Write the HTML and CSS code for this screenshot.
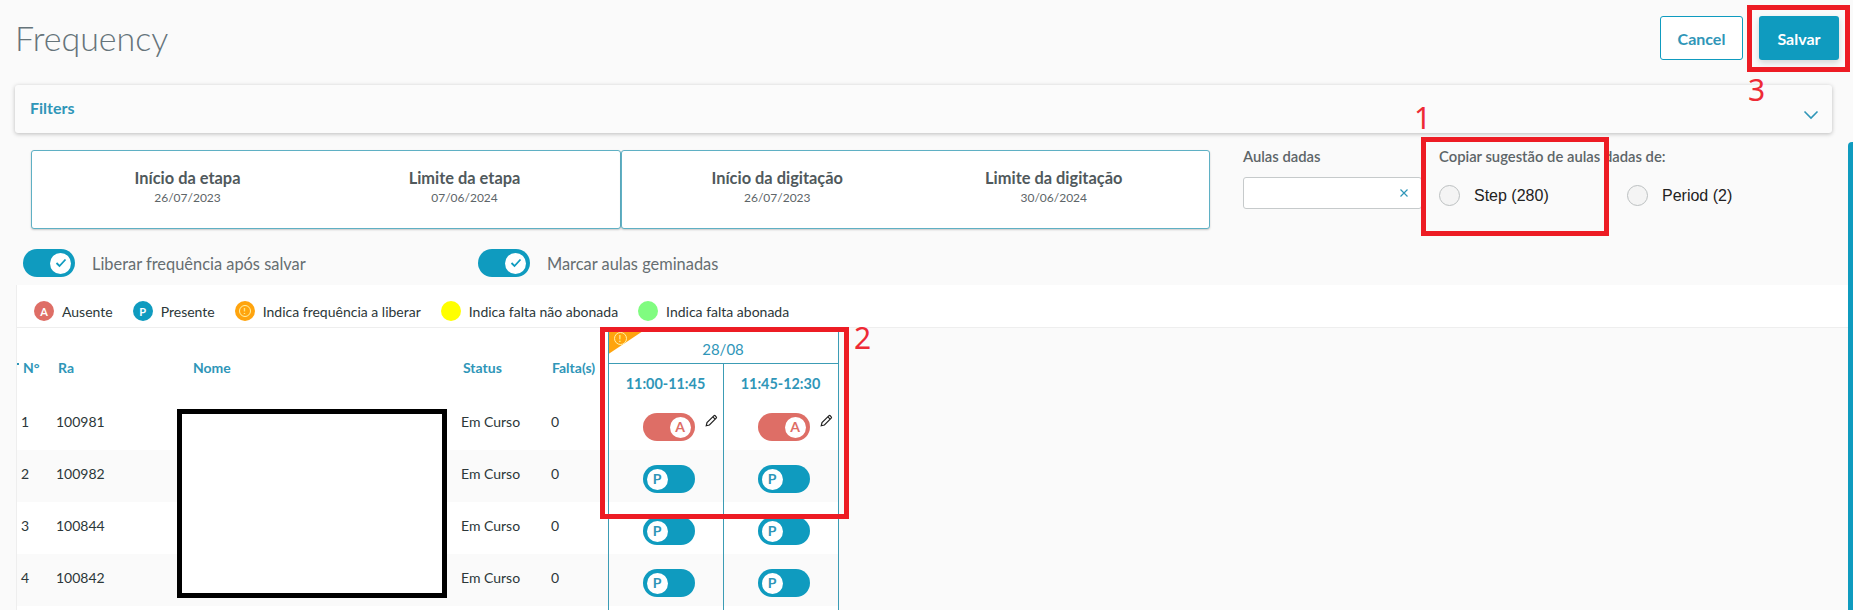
FILE: index.html
```html
<!DOCTYPE html>
<html lang="en">
<head>
    <meta charset="UTF-8">
    <title>Frequency</title>
    <link rel="stylesheet" href="styles.css">
</head>
<body>

<header class="top">
    <h1>Frequency</h1>
    <div class="actions">
        <button class="btn btn-outline">Cancel</button>
        <button class="btn btn-primary">Salvar</button>
    </div>
</header>

<section class="filters">
    <span class="filters-title">Filters</span>
    <svg class="chevron" width="16" height="10" viewBox="0 0 16 10"><path d="M1.5 1.5 8 8l6.5-6.5" fill="none" stroke="#2f96b8" stroke-width="1.6"/></svg>
</section>

<section class="period-row">
    <div class="info-card">
        <div class="info-item"><strong>Início da etapa</strong><small>26/07/2023</small></div>
        <div class="info-item"><strong>Limite da etapa</strong><small>07/06/2024</small></div>
    </div>
    <div class="info-card">
        <div class="info-item"><strong>Início da digitação</strong><small>26/07/2023</small></div>
        <div class="info-item"><strong>Limite da digitação</strong><small>30/06/2024</small></div>
    </div>
    <div class="given">
        <label>Aulas dadas</label>
        <div class="given-input">
            <svg width="10" height="10" viewBox="0 0 10 10"><path d="M1.5 1.5l7 7M8.5 1.5l-7 7" stroke="#2f96b8" stroke-width="1.2"/></svg>
        </div>
    </div>
    <div class="copy">
        <label>Copiar sugestão de aulas dadas de:</label>
        <div class="radios">
            <span class="radio radio-step"><i></i>Step (280)</span>
            <span class="radio"><i></i>Period (2)</span>
        </div>
    </div>
</section>

<section class="switches">
    <div class="switch switch-first">
        <span class="toggle toggle-on">
            <span class="knob">
                <svg width="12" height="10" viewBox="0 0 12 10"><path d="M1.5 5 4.5 8l6-6.5" fill="none" stroke="#0f9bbf" stroke-width="1.8"/></svg>
            </span>
        </span>
        Liberar frequência após salvar
    </div>
    <div class="switch">
        <span class="toggle toggle-on">
            <span class="knob">
                <svg width="12" height="10" viewBox="0 0 12 10"><path d="M1.5 5 4.5 8l6-6.5" fill="none" stroke="#0f9bbf" stroke-width="1.8"/></svg>
            </span>
        </span>
        Marcar aulas geminadas
    </div>
</section>

<section class="panel">
    <div class="legend">
        <span class="legend-item"><b class="dot dot-a">A</b>Ausente</span>
        <span class="legend-item"><b class="dot dot-p">P</b>Presente</span>
        <span class="legend-item"><b class="dot dot-w"><em>!</em></b>Indica frequência a liberar</span>
        <span class="legend-item"><b class="dot dot-y"></b>Indica falta não abonada</span>
        <span class="legend-item"><b class="dot dot-g"></b>Indica falta abonada</span>
    </div>

    <table class="grid">
        <colgroup>
            <col class="c-n"><col class="c-ra"><col class="c-nome"><col class="c-status"><col class="c-falta"><col class="c-slot"><col class="c-slot">
        </colgroup>
        <thead>
            <tr class="head-date">
                <th rowspan="2" class="th-n">N°</th>
                <th rowspan="2">Ra</th>
                <th rowspan="2">Nome</th>
                <th rowspan="2">Status</th>
                <th rowspan="2" class="th-falta">Falta(s)</th>
                <th colspan="2" class="th-date">
                    <span class="flag"><em>!</em></span>
                    28/08
                </th>
            </tr>
            <tr class="head-time">
                <th class="th-time">11:00-11:45</th>
                <th class="th-time">11:45-12:30</th>
            </tr>
        </thead>
        <tbody>
            <tr>
                <td class="td-n">1</td><td>100981</td><td></td><td>Em Curso</td><td>0</td>
                <td class="slot"><div class="slot-in"><span class="toggle toggle-a"><span class="knob">A</span></span>
                    <svg class="pencil" width="13" height="13" viewBox="0 0 13 13"><path d="M1.2 11.8 2 8.6 8.8 1.8a1 1 0 0 1 1.4 0l1 1a1 1 0 0 1 0 1.4L4.400 11z" fill="#fff" stroke="#222" stroke-width="1.2"/><path d="M7.800 2.800l2.400 2.400" stroke="#222" stroke-width="1.200"/></svg></div></td>
                <td class="slot"><div class="slot-in"><span class="toggle toggle-a"><span class="knob">A</span></span>
                    <svg class="pencil" width="13" height="13" viewBox="0 0 13 13"><path d="M1.2 11.8 2 8.6 8.8 1.8a1 1 0 0 1 1.4 0l1 1a1 1 0 0 1 0 1.4L4.400 11z" fill="#fff" stroke="#222" stroke-width="1.2"/><path d="M7.800 2.800l2.400 2.400" stroke="#222" stroke-width="1.200"/></svg></div></td>
            </tr>
            <tr>
                <td class="td-n">2</td><td>100982</td><td></td><td>Em Curso</td><td>0</td>
                <td class="slot"><div class="slot-in"><span class="toggle toggle-p"><span class="knob">P</span></span></div></td>
                <td class="slot"><div class="slot-in"><span class="toggle toggle-p"><span class="knob">P</span></span></div></td>
            </tr>
            <tr>
                <td class="td-n">3</td><td>100844</td><td></td><td>Em Curso</td><td>0</td>
                <td class="slot"><div class="slot-in"><span class="toggle toggle-p"><span class="knob">P</span></span></div></td>
                <td class="slot"><div class="slot-in"><span class="toggle toggle-p"><span class="knob">P</span></span></div></td>
            </tr>
            <tr>
                <td class="td-n">4</td><td>100842</td><td></td><td>Em Curso</td><td>0</td>
                <td class="slot"><div class="slot-in"><span class="toggle toggle-p"><span class="knob">P</span></span></div></td>
                <td class="slot"><div class="slot-in"><span class="toggle toggle-p"><span class="knob">P</span></span></div></td>
            </tr>
            <tr>
                <td class="td-n"></td><td></td><td></td><td></td><td></td>
                <td class="slot"></td>
                <td class="slot"></td>
            </tr>
        </tbody>
    </table>
</section>

<!-- annotations drawn over the screenshot -->
<div class="mark mark-1"></div>
<div class="mark mark-2"></div>
<div class="mark mark-3"></div>
<span class="mark-num num-1">1</span>
<span class="mark-num num-2">2</span>
<span class="mark-num num-3">3</span>
<div class="redact"></div>
<div class="scroll-thumb"></div>

</body>
</html>
```

FILE: styles.css
```css
html, body {
    height: 610px;
    overflow: hidden;
}

body {
    margin: 0;
    position: relative;
    font-family: 'Lato', 'Open Sans', sans-serif;
    font-size: 14px;
    background-color: #fafafa;
    color: #2c3739;
}

/* header */
.top {
    display: flex;
    justify-content: space-between;
    align-items: flex-start;
    height: 85px;
    padding: 16px 14px 0 15px;
    box-sizing: border-box;
}

.top h1 {
    margin: 0;
    font-size: 34px;
    line-height: 44px;
    font-weight: 300;
    color: #66747a;
}

.actions {
    display: flex;
    gap: 16px;
}

.btn {
    height: 44px;
    border-radius: 3px;
    font-family: inherit;
    font-size: 16px;
    font-weight: 700;
}

.btn-outline {
    width: 83px;
    border: 1px solid #0f9bbf;
    background-color: #fff;
    color: #2f96b8;
}

.btn-primary {
    width: 80px;
    border: none;
    background-color: #0f9bbf;
    color: #fff;
    box-shadow: 0 3px 6px rgba(0, 0, 0, 0.15);
}

/* filters */
.filters {
    display: flex;
    justify-content: space-between;
    align-items: center;
    height: 48px;
    margin: 0 21px 0 15px;
    padding: 0 13px 0 15px;
    box-sizing: border-box;
    border-radius: 3px;
    background-color: #fbfbfb;
    box-shadow: 0 1px 4px rgba(0, 0, 0, 0.25);
    color: #2f96b8;
    font-size: 16px;
    font-weight: 700;
}

.filters-title {
    margin-bottom: 4px;
}

.chevron {
    margin-top: 12px;
}

/* dates + aulas dadas */
.period-row {
    display: flex;
    height: 79px;
    margin-top: 17px;
    padding-left: 31px;
}

.info-card {
    display: grid;
    grid-template-columns: 1fr 1fr;
    width: 590px;
    height: 79px;
    padding: 0 17px;
    box-sizing: border-box;
    border: 1px solid #5fb0c4;
    border-radius: 3px;
    background-color: #fff;
    box-shadow: 0 1px 2px rgba(0, 0, 0, 0.2);
}

.info-card + .info-card {
    width: 589px;
}

.info-item {
    display: flex;
    flex-direction: column;
    align-items: center;
    padding-top: 17px;
}

.info-item strong {
    font-size: 16.4px;
    line-height: 19px;
    color: #50595c;
}

.info-item small {
    margin-top: 3px;
    font-size: 12px;
    line-height: 16px;
    color: #5d6568;
}

.given {
    width: 196px;
    margin: -2px 0 0 33px;
}

.copy {
    width: 300px;
    margin-top: -2px;
}

.given label,
.copy label {
    display: block;
    font-size: 14.8px;
    line-height: 16px;
    font-weight: 600;
    color: #5d6568;
}

.given-input {
    display: flex;
    align-items: center;
    justify-content: flex-end;
    width: 179px;
    height: 32px;
    margin-top: 13px;
    padding-right: 12px;
    box-sizing: border-box;
    border: 1px solid #c6cacb;
    border-radius: 3px;
    background-color: #fff;
}

.radios {
    display: flex;
    margin-top: 21px;
}

.radio {
    display: flex;
    align-items: center;
    font-family: 'Liberation Sans', sans-serif;
    font-size: 16px;
    color: #222;
}

.radio-step {
    width: 188px;
}

.radio i {
    width: 19px;
    height: 19px;
    margin-right: 14px;
    border: 1px solid #bcc0c1;
    border-radius: 50%;
    background-color: #f4f4f4;
}

/* switches */
.switches {
    display: flex;
    margin-top: 20px;
    padding-left: 23px;
    height: 28px;
}

.switch {
    display: flex;
    align-items: center;
    gap: 17px;
    font-size: 16.4px;
    color: #666e71;
}

.switch-first {
    width: 455px;
}

.toggle {
    display: flex;
    align-items: center;
    width: 52px;
    height: 28px;
    padding: 0 4px;
    box-sizing: border-box;
    border-radius: 14px;
}

.toggle-on,
.toggle-a {
    justify-content: flex-end;
}

.toggle-on,
.toggle-p {
    background-color: #0f9bbf;
}

.toggle-a {
    background-color: #de6e66;
}

.knob {
    display: flex;
    align-items: center;
    justify-content: center;
    width: 21px;
    height: 21px;
    border-radius: 50%;
    background-color: #fff;
    font-size: 14px;
    font-weight: 700;
}

.toggle-a .knob {
    color: #de6e66;
}

.toggle-p .knob {
    color: #2f96b8;
}

/* panel */
.panel {
    margin: 8px 0 0 16px;
    border-left: 1px solid #eee;
}

.legend {
    display: flex;
    align-items: center;
    gap: 20px;
    height: 43px;
    padding: 10px 0 0 17px;
    box-sizing: border-box;
    border-bottom: 1px solid #eee;
    background-color: #fff;
    font-size: 14px;
    color: #2c3739;
}

.legend-item {
    display: flex;
    align-items: center;
    gap: 8px;
}

.dot {
    display: flex;
    align-items: center;
    justify-content: center;
    width: 20px;
    height: 20px;
    border-radius: 50%;
    color: #fff;
    font-size: 11px;
}

.dot-a { background-color: #de6e66; }
.dot-p { background-color: #0f9bbf; }
.dot-w { background-color: #ffa40e; }
.dot-y { background-color: #ffff00; }
.dot-g { background-color: #80fc80; }

.dot em,
.flag em {
    display: flex;
    align-items: center;
    justify-content: center;
    width: 10px;
    height: 10px;
    border: 1px solid #fff2a8;
    border-radius: 50%;
    color: #fff2a8;
    font-size: 8px;
    font-style: normal;
    font-weight: 700;
}

.flag em {
    width: 11px;
    height: 11px;
    font-size: 9px;
}

/* table */
.grid {
    table-layout: fixed;
    width: 821px;
    border-collapse: collapse;
    background-color: #fff;
}

.c-n { width: 39px; }
.c-ra { width: 135px; }
.c-nome { width: 270px; }
.c-status { width: 90px; }
.c-falta { width: 57px; }
.c-slot { width: 115px; }

.grid th {
    padding: 8px 0 0 2px;
    color: #2f96b8;
    font-size: 14px;
    font-weight: 700;
    text-align: left;
}

.head-date {
    height: 35px;
}

.head-time {
    height: 35px;
}

/* sliver of the sort icon column cut off at the panel edge */
.th-n::before {
    content: "";
    display: inline-block;
    width: 2px;
    height: 2px;
    margin: 0 4px 0 -2px;
    vertical-align: 8px;
    background-color: #2f96b8;
}

.grid .th-falta {
    padding-left: 1px;
}

.grid .th-date {
    position: relative;
    padding: 7px 0 0;
    border: 1px solid #3c9cb5;
    border-top: none;
    font-weight: 400;
    font-size: 15px;
    text-align: center;
}

.grid .th-time {
    padding: 6px 0 0;
    border: 1px solid #3c9cb5;
    border-top: none;
    border-bottom: none;
    font-size: 14.4px;
    text-align: center;
}

.flag {
    position: absolute;
    top: 0;
    left: 0;
    width: 39px;
    height: 26px;
    padding: 4px 0 0 5px;
    box-sizing: border-box;
    background-color: #ffa40e;
    clip-path: polygon(0 0, 100% 0, 0 100%);
}

.grid tbody tr {
    height: 52px;
}

.grid tbody tr:nth-child(even) {
    background-color: #fafafa;
}

.grid td {
    padding: 14px 0 0;
    vertical-align: top;
    line-height: 20px;
    font-size: 14px;
}

.td-n {
    padding-left: 4px !important;
}

.grid .slot {
    padding: 15px 0 0 34px;
    border-left: 1px solid #3c9cb5;
    border-right: 1px solid #3c9cb5;
}

.slot-in {
    display: flex;
    align-items: flex-start;
}

.pencil {
    margin: 1px 0 0 10px;
}

/* annotations */
.mark {
    position: absolute;
    box-sizing: border-box;
    border: 5px solid #ed1c24;
}

.mark-1 { left: 1421px; top: 137px; width: 188px; height: 99px; }
.mark-2 { left: 600px; top: 327px; width: 249px; height: 192px; }
.mark-3 { left: 1747px; top: 5px; width: 103px; height: 67px; }

.mark-num {
    position: absolute;
    font-family: 'Noto Sans', sans-serif;
    font-size: 30px;
    line-height: 32px;
    color: #ee2a35;
}

.num-1 { left: 1414px; top: 102px; }
.num-2 { left: 854px; top: 322px; }
.num-3 { left: 1748px; top: 74px; }

.redact {
    position: absolute;
    left: 177px;
    top: 409px;
    width: 270px;
    height: 189px;
    box-sizing: border-box;
    border: 5px solid #000;
    background-color: #fff;
}

.scroll-thumb {
    position: absolute;
    left: 1848px;
    top: 142px;
    bottom: 0;
    width: 5px;
    border-radius: 4px 0 0 0;
    background-color: #0f9bbf;
}
```
